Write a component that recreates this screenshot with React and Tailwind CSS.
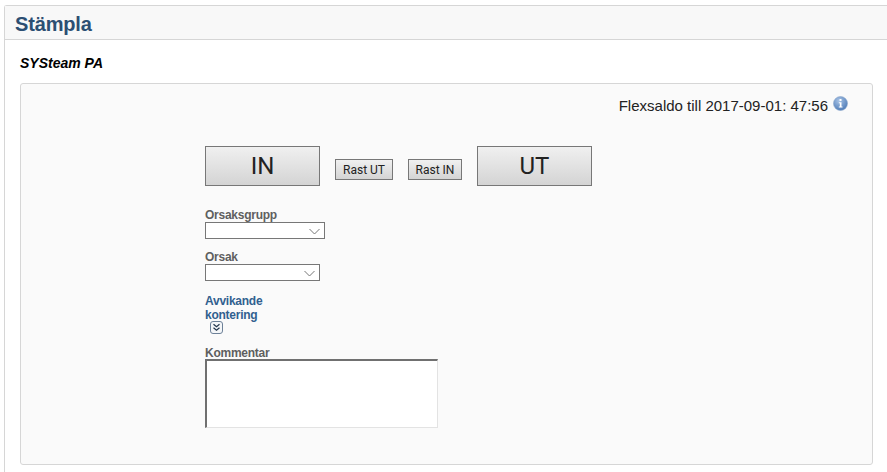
export default function App() {
  const btn = "box-border border border-[#777] bg-gradient-to-b from-[#f0f0f0] to-[#d4d4d4] text-[#222] flex items-center justify-center";
  const label = "text-[12px] leading-[14px] font-bold tracking-[-0.25px] text-[#5f5f5f]";
  const Chevron = () => (
    <svg width="11" height="7" viewBox="0 0 11 7" fill="none" stroke="#777" strokeWidth="1" className="absolute top-[5px] right-[4px]">
      <path d="M0.5 1l5 5 5-5" />
    </svg>
  );
  return (
    <div className="w-[887px] h-[472px] overflow-hidden bg-white pl-[4px] pt-[5px] font-['Liberation_Sans',Arial,sans-serif]">
      <div className="h-[467px] border-l border-t border-[#d6d6d6] rounded-tl-[3px]">
        <div className="h-[34px] bg-[#f8f8f8] border-b border-[#d6d6d6] pl-[10px] text-[20px] leading-[37px] font-bold tracking-[-0.15px] text-[#2c4f73]">Stämpla</div>
        <div className="pl-[15px] pt-[16px] pr-[14px]">
          <div className="h-[14px] text-[14px] leading-[15px] font-bold italic text-black">SYSteam PA</div>
          <div className="mt-[13px] h-[382px] w-[853px] border border-[#d6d6d6] rounded-[3px] bg-[#fafafa]">
            <div className="flex justify-end pt-[12px] pr-[24px] h-[62px]">
              <span className="text-[15px] leading-[20px] text-[#222]">Flexsaldo till 2017-09-01: 47:56</span>
              <svg width="15" height="15" viewBox="0 0 15 15" className="ml-[5px]">
                <defs>
                  <radialGradient id="ig" cx="40%" cy="30%" r="75%">
                    <stop offset="0%" stopColor="#a9c4e6" />
                    <stop offset="100%" stopColor="#4a78b5" />
                  </radialGradient>
                </defs>
                <circle cx="7.5" cy="7.5" r="7" fill="url(#ig)" stroke="#8fa9cc" strokeWidth="0.6" />
                <rect x="6.5" y="3" width="2" height="2" fill="#fff" />
                <path d="M5.8 6.2h2.7v4.2h1v1H5.8v-1h1V7.2h-1z" fill="#fff" />
              </svg>
            </div>
            <div className="ml-[184px] w-[400px]">
              <div className="flex items-center">
                <div className={btn + " w-[115px] h-[40px] text-[24px] font-['Roboto',sans-serif]"}>IN</div>
                <div className={btn + " w-[58px] h-[21px] ml-[15px] mt-[7px] text-[12px] font-['Roboto',sans-serif]"}>Rast UT</div>
                <div className={btn + " w-[54px] h-[21px] ml-[15px] mt-[7px] text-[12px] font-['Roboto',sans-serif]"}>Rast IN</div>
                <div className={btn + " w-[115px] h-[40px] ml-[15px] text-[24px] font-['Roboto',sans-serif]"}>UT</div>
              </div>
              <div className={label + " mt-[22px]"}>Orsaksgrupp</div>
              <div className="relative box-border w-[120px] h-[17px] border border-[#777] bg-white"><Chevron /></div>
              <div className={label + " mt-[11px]"}>Orsak</div>
              <div className="relative box-border w-[115px] h-[17px] border border-[#777] bg-white"><Chevron /></div>
              <div className="mt-[13px] w-[70px] text-[12px] leading-[14px] font-bold tracking-[-0.25px] text-[#31608f]">Avvikande kontering</div>
              <svg width="13" height="13" viewBox="0 0 13 13" fill="none" className="ml-[5px] -mt-[1px] block">
                <rect x="0.5" y="0.5" width="12" height="12" rx="2.5" fill="#f4f6f8" stroke="#6d8198" />
                <path d="M3.5 3.2l3 2.6 3-2.6M3.5 6.7l3 2.6 3-2.6" stroke="#22364d" strokeWidth="1.2" />
              </svg>
              <div className={label + " mt-[12px] h-[13px]"}>Kommentar</div>
              <div className="box-border w-[233px] h-[69px] bg-white border-2 border-t-[#707070] border-l-[#707070] border-r-[#e3e3e3] border-b-[#e3e3e3] border-r-1 border-b-1"></div>
            </div>
          </div>
        </div>
      </div>
    </div>
  );
}
